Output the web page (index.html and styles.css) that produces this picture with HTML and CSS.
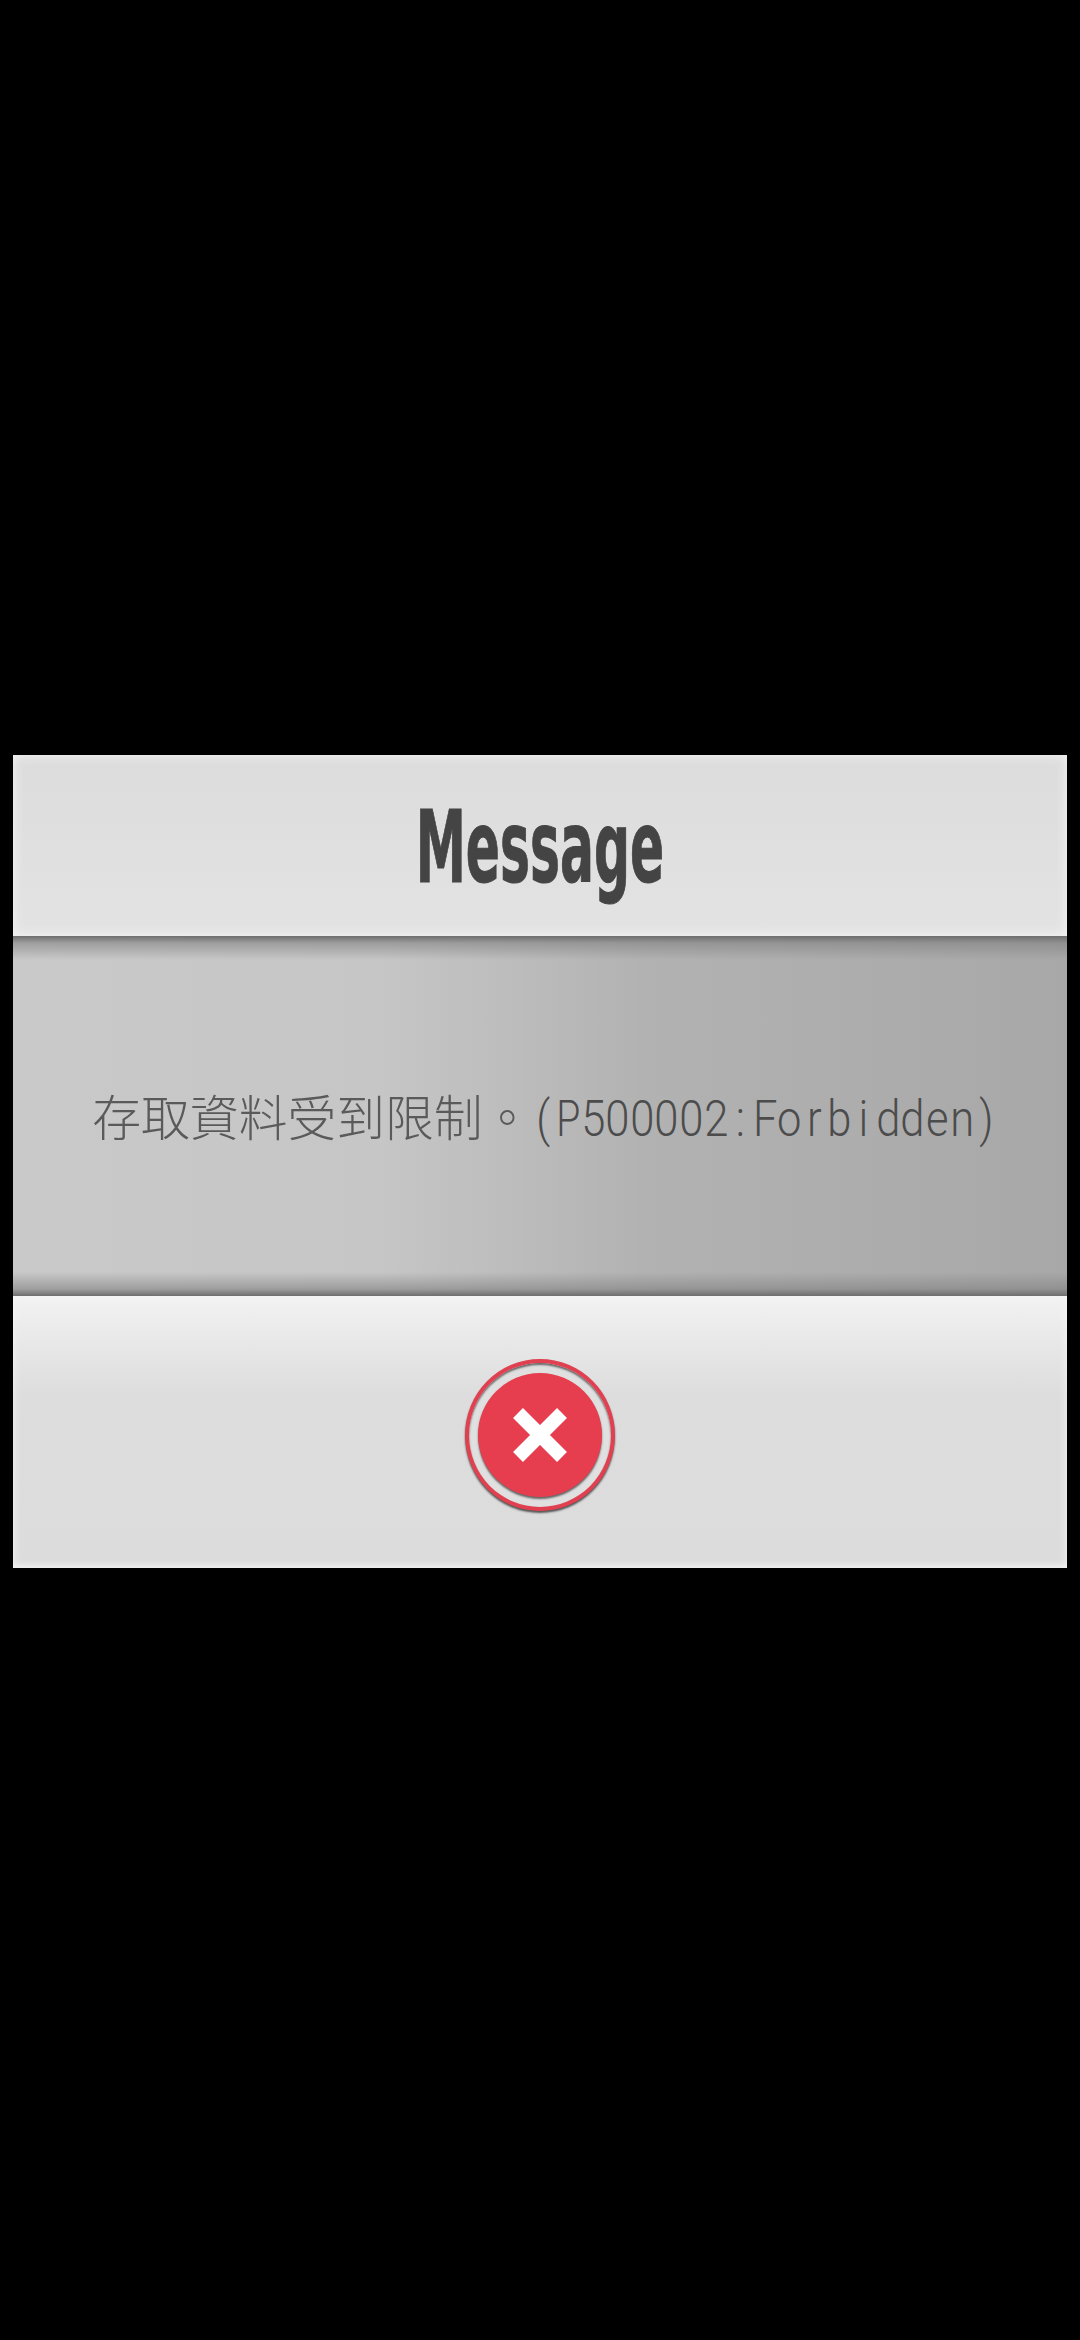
FILE: index.html
```html
<!DOCTYPE html>
<html lang="zh-Hant">
<head>
  <meta charset="UTF-8" />
  <title>Message</title>
  <link rel="stylesheet" href="styles.css">
</head>
<body>
  <div class="dialog">
    <div class="dialog-header">
      <h1 class="dialog-title">Message</h1>
    </div>
    <div class="dialog-body">
      <p class="dialog-text">存取資料受到限制。<span class="latin"><span>(</span><span class="wide">P</span><span>5</span><span>0</span><span>0</span><span>0</span><span>0</span><span>2</span><span>:</span><span>F</span><span>o</span><span>r</span><span>b</span><span>i</span><span>d</span><span>d</span><span>e</span><span>n</span><span>)</span></span></p>
    </div>
    <div class="dialog-footer">
      <button class="close-button" aria-label="Close">
        <span class="close-disc">
          <svg class="close-icon" viewBox="0 0 54 54">
            <path d="M5 5L49 49M49 5L5 49" />
          </svg>
        </span>
      </button>
    </div>
  </div>
</body>
</html>
```

FILE: styles.css
```css
body {
  margin: 0;
  padding: 755px 13px 0;
  height: 2340px;
  box-sizing: border-box;
  background: #000;
  overflow: hidden;
}
.dialog {
  display: flex;
  flex-direction: column;
  height: 813px;
}
.dialog-header {
  height: 181px;
  display: flex;
  justify-content: center;
  background: linear-gradient(to bottom, #dcdcdc, #e3e3e3);
  box-shadow: inset 0 0 12px #f6f6f6;
}
.dialog-title {
  margin: 33px 0 0;
  height: 120px;
  font-family: "DejaVu Sans", sans-serif;
  font-stretch: condensed;
  font-size: 100px;
  line-height: 120px;
  font-weight: bold;
  color: #444;
  -webkit-text-stroke: 1px #444;
  transform: scaleX(0.56);
}
.dialog-body {
  height: 360px;
  display: flex;
  align-items: center;
  justify-content: center;
  background:
    linear-gradient(to bottom, #6e6e6e 0, rgba(130, 130, 130, 0.6) 7px, rgba(170, 170, 170, 0) 24px),
    linear-gradient(to top, #6e6e6e 0, rgba(130, 130, 130, 0.6) 7px, rgba(170, 170, 170, 0) 24px),
    linear-gradient(to right, #c9c9c9 0, #c6c6c6 35%, #b2b2b2 60%, #a8a8a8 100%);
}
.dialog-text {
  margin: -4px 0 0 11px;
  font-family: "Noto Sans CJK TC", sans-serif;
  font-size: 48.8px;
  font-weight: 300;
  white-space: nowrap;
  color: #5a5a5a;
}
.latin {
  font-family: Roboto, sans-serif;
  font-size: 50px;
  font-weight: 300;
  color: #4c4c4c;
}
.latin span {
  display: inline-flex;
  justify-content: center;
  width: 24.6px;
  transform: scaleX(0.87);
}
.latin .wide {
  transform: scaleX(0.78);
}
.dialog-footer {
  flex: 1;
  display: flex;
  justify-content: center;
  padding-top: 63px;
  background: linear-gradient(to bottom, #f2f2f2 0, #dddddd 36%, #dcdcdc 98%, #e6e6e6 100%);
  box-shadow: inset 0 0 10px #f6f6f6;
}
.close-button {
  width: 150px;
  height: 152px;
  padding: 0;
  display: flex;
  align-items: center;
  justify-content: center;
  border: 4px solid #e04050;
  border-radius: 50%;
  background: #e0e0e0;
  box-shadow: 0 2px 2px #555, inset 0 2px 2px #666;
  box-sizing: border-box;
}
.close-disc {
  width: 124px;
  height: 124px;
  display: flex;
  align-items: center;
  justify-content: center;
  border-radius: 50%;
  background: #e63e4e;
  box-shadow: 0 2px 2px #666;
}
.close-icon {
  width: 54px;
  height: 54px;
  fill: none;
  stroke: #fff;
  stroke-width: 14;
}
```
